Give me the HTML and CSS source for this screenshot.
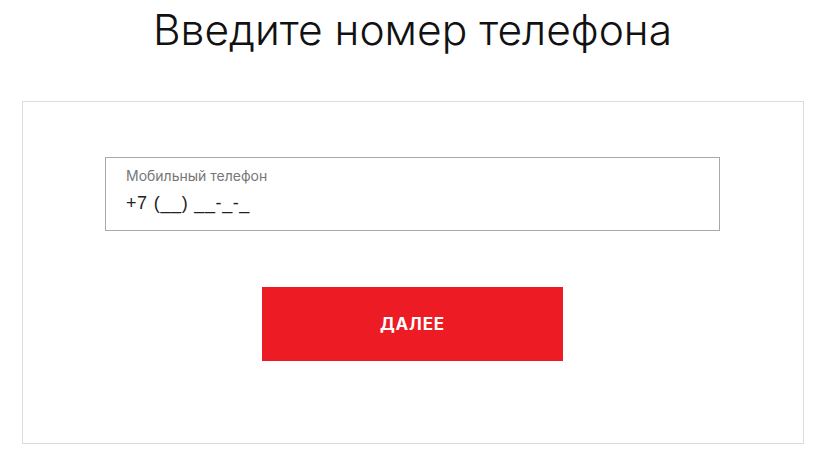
FILE: index.html
```html
<!DOCTYPE html>
<html lang="ru">
<head>
<meta charset="utf-8">
<link rel="stylesheet" href="styles.css">
</head>
<body>
<main class="page">
  <h1 class="title">Введите номер телефона</h1>
  <section class="card">
    <label class="field">
      <span class="field-label">Мобильный телефон</span>
      <span class="field-value">+7 (__) __-_-_</span>
    </label>
    <button class="btn" type="button">ДАЛЕЕ</button>
  </section>
</main>
</body>
</html>
```
FILE: styles.css
```css
* { box-sizing: border-box; }
html, body { margin: 0; padding: 0; background: #fff; }
body { font-family: Inter, "Noto Sans", sans-serif; color: #111; }
.page {
  width: 782px;
  margin: 0 auto;
  display: flex;
  flex-direction: column;
}
.title {
  margin: 0;
  height: 101px;
  padding-top: 4px;
  font-weight: 300;
  font-size: 42.5px;
  line-height: 52px;
  text-align: center;
  color: #111;
}
.card {
  height: 343px;
  border: 1px solid #dcdcdf;
  padding: 55px 0 0;
  display: flex;
  flex-direction: column;
  align-items: center;
  gap: 56px;
}
.field {
  width: 615px;
  height: 74px;
  border: 1px solid #a9a9a9;
  padding: 8px 20px 0;
  display: flex;
  flex-direction: column;
}
.field-label {
  font-size: 14px;
  line-height: 20px;
  color: #777;
}
.field-value {
  margin-top: 5px;
  font-family: "Liberation Sans", Arial, sans-serif;
  font-size: 18px;
  line-height: 24px;
  letter-spacing: 0.6px;
  word-spacing: 0.5px;
  color: #222;
}
.btn {
  width: 301px;
  height: 74px;
  border: 0;
  background: #ed1c24;
  color: #fff;
  font-family: Inter, "Noto Sans", sans-serif;
  font-weight: 700;
  font-size: 17px;
  letter-spacing: 0.8px;
}
```
